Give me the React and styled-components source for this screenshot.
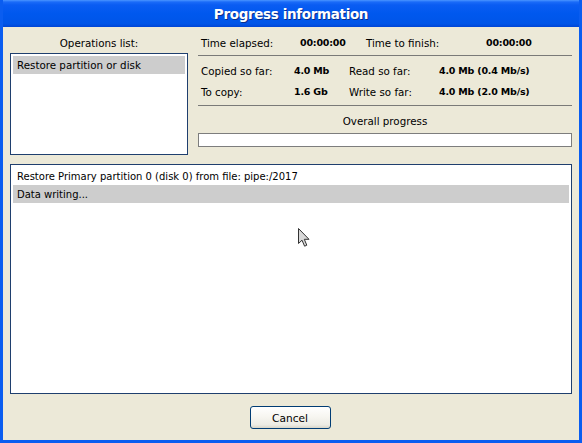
import React from "react";
import styled, { createGlobalStyle } from "styled-components";

const GlobalStyle = createGlobalStyle`
  html, body {
    margin: 0;
    padding: 0;
    background: #0058ee;
  }
  body {
    font-family: "DejaVu Sans", "Liberation Sans", sans-serif;
    font-size: 10.3px;
    color: #000;
  }
`;

const Window = styled.div`
  position: relative;
  width: 582px;
  height: 443px;
  box-sizing: border-box;
  display: flex;
  flex-direction: column;
  background: #0058ee;
  border-left: 3px solid #0a5df0;
  border-right: 3px solid #0a5df0;
  border-bottom: 3px solid #0a5df0;
  overflow: hidden;
`;

const TitleBar = styled.div`
  height: 27px;
  margin: 0 -3px;
  display: flex;
  align-items: center;
  justify-content: center;
  background: linear-gradient(
    #4a95ff 0px,
    #1a6bf8 2px,
    #0a5cf2 5px,
    #0058ee 50%,
    #0055e8 88%,
    #0045d5 100%
  );
  color: #fff;
  font-weight: bold;
  font-size: 13.5px;
  letter-spacing: -0.35px;
  text-shadow: 1px 1px 0 #0a2f8c;
`;

const Body = styled.div`
  flex: 1;
  background: #ece9d8;
  padding: 5px 7px 0 7px;
  display: flex;
  flex-direction: column;
`;

const TopRow = styled.div`
  display: flex;
  gap: 10px;
`;

const OpsColumn = styled.div`
  width: 178px;
  display: flex;
  flex-direction: column;
`;

const Caption = styled.div`
  height: ${(p) => p.h || 21}px;
  margin-top: ${(p) => p.mt || 0}px;
  display: flex;
  align-items: center;
  justify-content: center;
`;

const ListBox = styled.div`
  box-sizing: border-box;
  height: ${(p) => p.h}px;
  background: #fff;
  border: 1px solid #1f3f6e;
  padding: 2px;
`;

const ListRow = styled.div`
  height: 18px;
  padding-left: 4px;
  display: flex;
  align-items: center;
  white-space: nowrap;
  background: ${(p) => (p.selected ? "#cdcdcd" : "transparent")};
`;

const LogRow = styled(ListRow)`
  font-size: 10px;
`;

const StatsColumn = styled.div`
  flex: 1;
  display: flex;
  flex-direction: column;
`;

const StatGrid = styled.div`
  display: grid;
  grid-template-columns: ${(p) => p.cols};
  grid-auto-rows: ${(p) => p.rowH || 21}px;
  align-items: center;
  margin-top: ${(p) => p.mt || 0}px;
`;

const Label = styled.div`
  white-space: nowrap;
  padding-left: ${(p) => p.pl || 0}px;
`;

const Value = styled.div`
  white-space: nowrap;
  font-weight: bold;
  font-size: 9.5px;
  letter-spacing: -0.2px;
`;

const Separator = styled.div`
  height: 1px;
  background: #7a7a78;
  margin-top: ${(p) => p.mt || 0}px;
`;

const ProgressTrack = styled.div`
  box-sizing: border-box;
  height: 14px;
  margin-top: 2px;
  background: #fff;
  border: 1px solid #7d7d7d;
`;

const LogBox = styled(ListBox)`
  margin-top: 9px;
`;

const ButtonBar = styled.div`
  flex: 1;
  display: flex;
  justify-content: center;
  padding-top: 12px;
  padding-right: 2px;
`;

const Button = styled.button`
  box-sizing: border-box;
  width: 81px;
  height: 23px;
  border: 1px solid #003c74;
  border-radius: 3px;
  background: linear-gradient(#ffffff 0%, #f7f6f1 45%, #ecebe4 85%, #d8d5c8 100%);
  font-family: "DejaVu Sans", "Liberation Sans", sans-serif;
  font-size: 10.6px;
  color: #000;
  padding: 0;
`;

const Cursor = styled.svg`
  position: absolute;
  left: 295px;
  top: 228px;
  pointer-events: none;
`;

export default function App() {
  return (
    <>
      <GlobalStyle />
      <Window>
        <TitleBar>Progress information</TitleBar>
        <Body>
          <TopRow>
            <OpsColumn>
              <Caption>Operations list:</Caption>
              <ListBox h={102}>
                <ListRow selected>Restore partition or disk</ListRow>
              </ListBox>
            </OpsColumn>
            <StatsColumn>
              <StatGrid cols="102px 66px 120px 1fr" rowH={21}>
                <Label pl={3}>Time elapsed:</Label>
                <Value>00:00:00</Value>
                <Label>Time to finish:</Label>
                <Value>00:00:00</Value>
              </StatGrid>
              <Separator mt={2} />
              <StatGrid cols="96px 55px 90px 1fr" rowH={21} mt={4}>
                <Label pl={3}>Copied so far:</Label>
                <Value>4.0 Mb</Value>
                <Label>Read so far:</Label>
                <Value>4.0 Mb (0.4 Mb/s)</Value>
                <Label pl={3}>To copy:</Label>
                <Value>1.6 Gb</Value>
                <Label>Write so far:</Label>
                <Value>4.0 Mb (2.0 Mb/s)</Value>
              </StatGrid>
              <Separator mt={3} />
              <Caption h={21} mt={4}>
                Overall progress
              </Caption>
              <ProgressTrack />
            </StatsColumn>
          </TopRow>
          <LogBox h={230}>
            <LogRow>Restore Primary partition 0 (disk 0) from file: pipe:/2017</LogRow>
            <LogRow selected>Data writing...</LogRow>
          </LogBox>
          <ButtonBar>
            <Button>Cancel</Button>
          </ButtonBar>
        </Body>
        <Cursor width="14" height="20" viewBox="0 0 14 20">
          <path
            d="M0.5 0.5 L0.5 15.5 L4 12.2 L6.6 18.2 L8.8 17.2 L6.3 11.3 L11 11.3 Z"
            fill="#d8d8d8"
            stroke="#333"
            strokeWidth="1"
            strokeLinejoin="round"
          />
        </Cursor>
      </Window>
    </>
  );
}
